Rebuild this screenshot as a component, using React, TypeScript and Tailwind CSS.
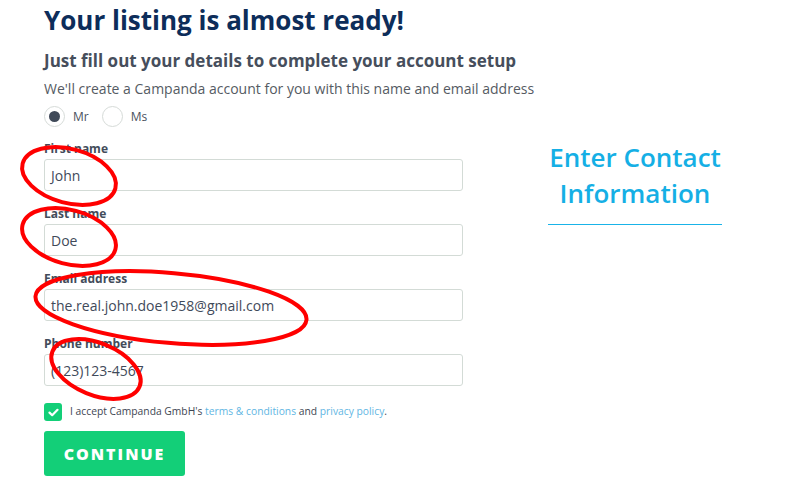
import React from "react";

const font = { fontFamily: '"Open Sans", "Noto Sans", Arial, sans-serif' };

function Field({ label, value }: { label: string; value: string }) {
  return (
    <div className="mt-[15px] first:mt-[14px]">
      <div className="text-[12px] leading-[16px] font-bold text-[#434c5a]">{label}</div>
      <div className="mt-[2px] h-[32px] w-[419px] rounded-[3px] border border-[#d3dbd6] bg-white flex items-center pl-[6px] text-[14px] text-[#3f4a5a]">
        {value}
      </div>
    </div>
  );
}

export default function App() {
  return (
    <div className="relative w-[805px] h-[493px] bg-white overflow-hidden" style={font}>
      <div className="flex pl-[44px]">
        <div className="w-[419px] shrink-0">
          <h1 className="mt-[2px] text-[26px] leading-[36px] font-bold text-[#0d2d5a] whitespace-nowrap">
            Your listing is almost ready!
          </h1>
          <h2 className="mt-[11px] text-[17px] leading-[24px] font-bold text-[#464e5c] whitespace-nowrap">
            Just fill out your details to complete your account setup
          </h2>
          <p className="mt-[6px] text-[14px] leading-[20px] text-[#555b63] whitespace-nowrap">
            We'll create a Campanda account for you with this name and email address
          </p>
          <div className="mt-[7px] flex items-center h-[21px] text-[12px] text-[#4a525e]">
            <span className="w-[21px] h-[21px] rounded-full border border-[#d6dbd8] flex items-center justify-center">
              <span className="w-[11px] h-[11px] rounded-full bg-[#404a59]" />
            </span>
            <span className="ml-[8px]">Mr</span>
            <span className="ml-[13px] w-[21px] h-[21px] rounded-full border border-[#d6dbd8]" />
            <span className="ml-[8px]">Ms</span>
          </div>
          <div className="flex flex-col">
            <Field label="First name" value="John" />
            <Field label="Last name" value="Doe" />
            <Field label="Email address" value="the.real.john.doe1958@gmail.com" />
            <Field label="Phone number" value="(123)123-4567" />
          </div>
          <div className="mt-[17px] flex items-center h-[18px]">
            <span className="w-[18px] h-[18px] rounded-[3px] bg-[#13cf78] flex items-center justify-center">
              <svg width="11" height="9" viewBox="0 0 11 9">
                <path d="M1.5 4.6 L4.2 7.2 L9.5 1.8" fill="none" stroke="white" strokeWidth="2.2" strokeLinecap="round" strokeLinejoin="round" />
              </svg>
            </span>
            <span className="ml-[8px] text-[10.3px] text-[#3e4652] whitespace-nowrap">
              I accept Campanda GmbH's <span className="text-[#5fb6e3]">terms &amp; conditions</span> and{" "}
              <span className="text-[#5fb6e3]">privacy policy</span>.
            </span>
          </div>
          <button className="mt-[10px] w-[141px] h-[45px] rounded-[3px] bg-[#13cf78] text-white font-extrabold text-[16px] tracking-[2px] flex items-center justify-center">
            CONTINUE
          </button>
        </div>
        <div className="ml-[85px] w-[174px] shrink-0 mt-[139px] flex flex-col items-center">
          <div className="text-[26px] leading-[36px] font-semibold text-[#15afe5] text-center whitespace-nowrap">
            Enter Contact
            <br />
            Information
          </div>
          <div className="mt-[13px] h-px w-[174px] bg-[#19b3e8]" />
        </div>
      </div>
      <svg className="absolute inset-0 pointer-events-none" width="805" height="493" viewBox="0 0 805 493">
        <g fill="none" stroke="#f00" strokeWidth="4">
          <ellipse cx="69" cy="176" rx="48" ry="27" transform="rotate(15 69 176)" />
          <ellipse cx="69" cy="237" rx="48" ry="27" transform="rotate(15 69 237)" />
          <ellipse cx="171" cy="308" rx="136" ry="35" transform="rotate(5 171 308)" />
          <ellipse cx="96" cy="369" rx="47" ry="26" transform="rotate(22 96 369)" />
        </g>
      </svg>
    </div>
  );
}
